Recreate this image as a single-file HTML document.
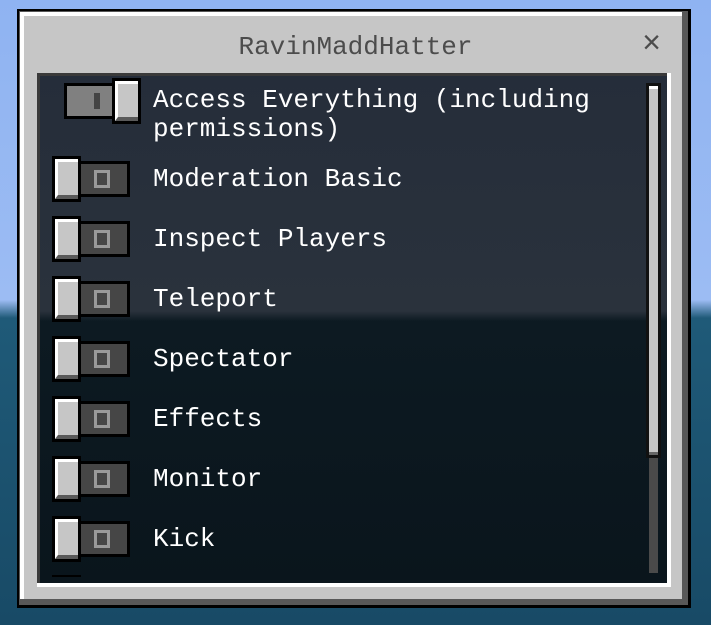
<!DOCTYPE html>
<html><head><style>
*{margin:0;padding:0;box-sizing:border-box}
body{width:711px;height:625px;overflow:hidden;position:relative;font-family:"Liberation Mono",monospace;
background:linear-gradient(#8fb3f2 0,#9cbcf3 300px,#1f5a78 318px,#184a66 625px);}
.frame{position:absolute;left:17px;top:9px;width:674px;height:599px;background:#000;}
.shadow{position:absolute;left:19px;top:11px;width:669px;height:594px;background:#585858}
.white{position:absolute;left:20px;top:12px;width:662px;height:587px;background:#fff}
.panel{position:absolute;left:24px;top:16px;width:658px;height:583px;background:#c6c6c6}
.title{position:absolute;left:0;width:711px;top:32px;text-align:center;color:#4c4c4c;font-size:26px;line-height:30px}
.x{position:absolute;left:642px;top:28px;color:#4c4c4c;font-size:32px;line-height:34px}
.inner{position:absolute;left:37px;top:73px;width:634px;height:514px;background:#fff}
.innerdark{position:absolute;left:37px;top:73px;width:630px;height:510px;border-top:3px solid #3a3a3a;border-left:3px solid #3a3a3a;
background:linear-gradient(#252d3a 0,#2a323c 235px,#0d1a22 245px,#0a151c 510px)}
.row{position:absolute;left:153px;color:#fff;font-size:26px;line-height:30px;white-space:nowrap}
.track{position:absolute;width:52px;height:36px;background:#000;}
.track i{position:absolute;left:3px;top:3px;right:3px;bottom:3px;background:#464646}
.track b{position:absolute;left:16px;top:9px;width:16px;height:18px;border:3px solid #9a9a9a}
.knob{position:absolute;width:29px;height:46px;background:#000}
.knob i{position:absolute;left:3px;top:3px;right:3px;bottom:3px;background:#c6c6c6;border-top:3px solid #fff;border-left:3px solid #fff;border-bottom:4px solid #5a5a5a}
.sb{position:absolute;left:649px;top:84px;width:9px;height:489px;background:#4a4a4a}
.thumb{position:absolute;left:646px;top:83px;width:15px;height:375px;background:#111}
.thumb i{position:absolute;left:3px;top:3px;width:9px;bottom:3px;background:#c6c6c6;border-top:3px solid #fff;border-bottom:3px solid #666}
</style></head><body>
<div class="frame"></div><div class="shadow"></div><div class="white"></div><div class="panel"></div>
<div class="title">RavinMaddHatter</div><div class="x">×</div>
<div class="inner"></div><div class="innerdark"></div>
<div class="sb"></div><div class="thumb"><i></i></div>

<div class="track" style="left:64px;top:83px"><i style="background:#808080"></i><b style="left:30px;top:10px;width:6px;height:16px;border:none;background:#444"></b></div>
<div class="knob" style="left:112px;top:78px"><i></i></div>
<div class="row" style="top:86px;line-height:29px">Access Everything (including<br>permissions)</div>

<div class="track" style="left:78px;top:161px"><i></i><b></b></div><div class="knob" style="left:52px;top:156px"><i></i></div>
<div class="row" style="top:164px">Moderation Basic</div>
<div class="track" style="left:78px;top:221px"><i></i><b></b></div><div class="knob" style="left:52px;top:216px"><i></i></div>
<div class="row" style="top:224px">Inspect Players</div>
<div class="track" style="left:78px;top:281px"><i></i><b></b></div><div class="knob" style="left:52px;top:276px"><i></i></div>
<div class="row" style="top:284px">Teleport</div>
<div class="track" style="left:78px;top:341px"><i></i><b></b></div><div class="knob" style="left:52px;top:336px"><i></i></div>
<div class="row" style="top:344px">Spectator</div>
<div class="track" style="left:78px;top:401px"><i></i><b></b></div><div class="knob" style="left:52px;top:396px"><i></i></div>
<div class="row" style="top:404px">Effects</div>
<div class="track" style="left:78px;top:461px"><i></i><b></b></div><div class="knob" style="left:52px;top:456px"><i></i></div>
<div class="row" style="top:464px">Monitor</div>
<div class="track" style="left:78px;top:521px"><i></i><b></b></div><div class="knob" style="left:52px;top:516px"><i></i></div>
<div class="row" style="top:524px">Kick</div>
<div style="position:absolute;left:52px;top:575px;width:29px;height:2px;background:#000"></div>
</body></html>
